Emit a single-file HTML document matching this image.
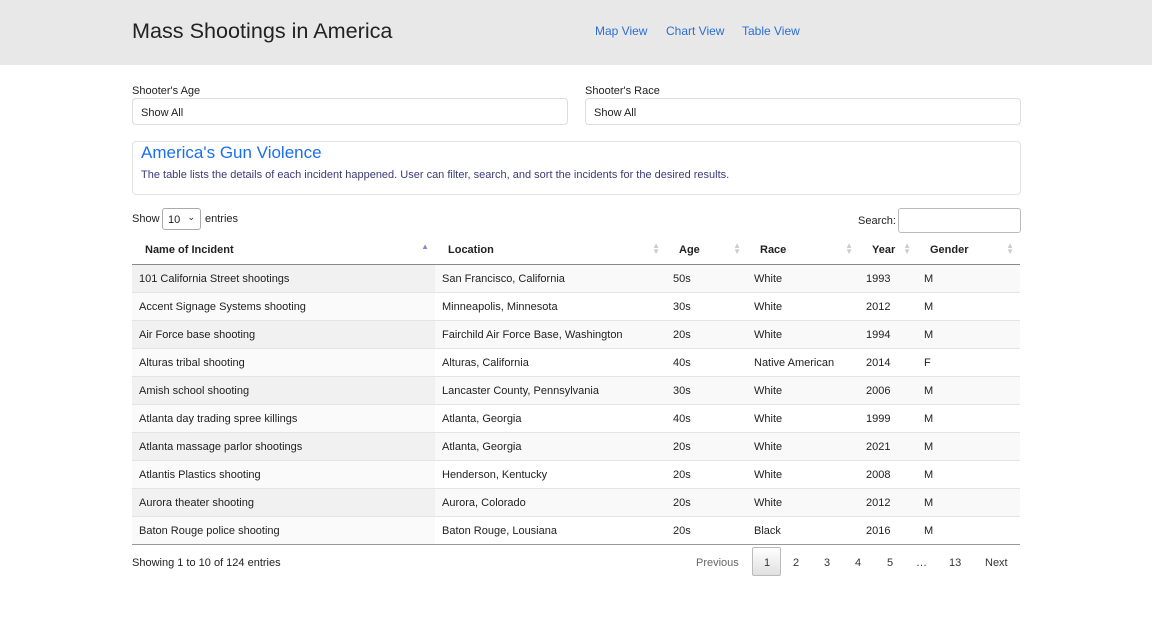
<!DOCTYPE html>
<html><head><meta charset="utf-8"><style>
*{box-sizing:border-box;margin:0;padding:0}
body{width:1152px;height:643px;background:#fff;font-family:"Liberation Sans",sans-serif;color:#222;position:relative;overflow:hidden}
.hdr{position:absolute;left:0;top:0;width:1152px;height:65px;background:#e8e8e8}
.title{position:absolute;left:132px;top:18px;font-size:21.6px;color:#222}
.nav{position:absolute;top:24px;font-size:12px;color:#2a6fd6}
.lbl{position:absolute;top:85px;font-size:11px;color:#222}
.sel{position:absolute;top:98px;height:27px;border:1px solid #ddd;border-radius:4px;font-size:11px;padding:8px 8px}
.card{position:absolute;left:132px;top:141px;width:889px;height:54px;border:1px solid #e2e2e2;border-radius:4px}
.card h2{position:absolute;left:8px;top:1px;font-size:17px;font-weight:normal;color:#1a6ff0}
.card p{position:absolute;left:8px;top:27px;font-size:11px;color:#3a3a7a}
.small{position:absolute;font-size:11px;color:#222}
table{position:absolute;left:132px;top:234px;width:888px;border-collapse:collapse;font-size:11px;table-layout:fixed}
th{height:30px;text-align:left;font-weight:bold;border-bottom:1px solid #888;padding-left:13px;padding-top:2px;position:relative}
th .a{position:absolute;right:6px;top:9px;font-size:8px;line-height:6px;color:#ccc}
td{height:28px;padding-left:7px;padding-top:2px;border-top:1px solid #e4e4e4}
tbody tr:first-child td{border-top:none}
tr.o td{background:#f9f9f9}tr.o td:first-child{background:#f1f1f1}
tr.e td:first-child{background:#fafafa}
.bot{position:absolute;left:132px;top:544px;width:888px;border-top:1px solid #999}
.pg{position:absolute;top:557px;font-size:11px;color:#333}
</style></head><body>
<div class="hdr"><div class="title">Mass Shootings in America</div>
<div class="nav" style="left:595px">Map View</div><div class="nav" style="left:666px">Chart View</div><div class="nav" style="left:742px">Table View</div></div>
<div class="lbl" style="left:132px">Shooter's Age</div><div class="sel" style="left:132px;width:436px">Show All</div>
<div class="lbl" style="left:585px">Shooter's Race</div><div class="sel" style="left:585px;width:436px">Show All</div>
<div class="card"><h2>America's Gun Violence</h2><p>The table lists the details of each incident happened. User can filter, search, and sort the incidents for the desired results.</p></div>
<div class="small" style="left:132px;top:213px">Show</div>
<div style="position:absolute;left:162px;top:208px;width:39px;height:22px;border:1px solid #aaa;border-radius:3px;font-size:11px;padding:5px 5px">10<span style="position:absolute;right:5px;top:3px;font-size:9px">⌄</span></div>
<div class="small" style="left:205px;top:213px">entries</div>
<div class="small" style="left:858px;top:215px">Search:</div>
<div style="position:absolute;left:898px;top:208px;width:123px;height:25px;border:1px solid #bbb;border-radius:3px"></div>
<table>
<colgroup><col style="width:303px"><col style="width:231px"><col style="width:81px"><col style="width:112px"><col style="width:58px"><col style="width:103px"></colgroup>
<thead><tr><th>Name of Incident<span class="a" style="color:#8888cc;top:10px">▲</span></th><th>Location<span class="a">▲<br>▼</span></th><th>Age<span class="a">▲<br>▼</span></th><th>Race<span class="a">▲<br>▼</span></th><th>Year<span class="a">▲<br>▼</span></th><th>Gender<span class="a">▲<br>▼</span></th></tr></thead>
<tbody>
<tr class="o"><td>101 California Street shootings</td><td>San Francisco, California</td><td>50s</td><td>White</td><td>1993</td><td>M</td></tr>
<tr class="e"><td>Accent Signage Systems shooting</td><td>Minneapolis, Minnesota</td><td>30s</td><td>White</td><td>2012</td><td>M</td></tr>
<tr class="o"><td>Air Force base shooting</td><td>Fairchild Air Force Base, Washington</td><td>20s</td><td>White</td><td>1994</td><td>M</td></tr>
<tr class="e"><td>Alturas tribal shooting</td><td>Alturas, California</td><td>40s</td><td>Native American</td><td>2014</td><td>F</td></tr>
<tr class="o"><td>Amish school shooting</td><td>Lancaster County, Pennsylvania</td><td>30s</td><td>White</td><td>2006</td><td>M</td></tr>
<tr class="e"><td>Atlanta day trading spree killings</td><td>Atlanta, Georgia</td><td>40s</td><td>White</td><td>1999</td><td>M</td></tr>
<tr class="o"><td>Atlanta massage parlor shootings</td><td>Atlanta, Georgia</td><td>20s</td><td>White</td><td>2021</td><td>M</td></tr>
<tr class="e"><td>Atlantis Plastics shooting</td><td>Henderson, Kentucky</td><td>20s</td><td>White</td><td>2008</td><td>M</td></tr>
<tr class="o"><td>Aurora theater shooting</td><td>Aurora, Colorado</td><td>20s</td><td>White</td><td>2012</td><td>M</td></tr>
<tr class="e"><td>Baton Rouge police shooting</td><td>Baton Rouge, Lousiana</td><td>20s</td><td>Black</td><td>2016</td><td>M</td></tr>
</tbody></table>
<div class="bot"></div>
<div class="small" style="left:132px;top:557px">Showing 1 to 10 of 124 entries</div>
<div class="pg" style="left:696px;color:#666">Previous</div>
<div style="position:absolute;left:752px;top:547px;width:29px;height:29px;border:1px solid #bbb;border-radius:2px;background:linear-gradient(#fff,#e0e0e0)"></div>
<div class="pg" style="left:764px">1</div><div class="pg" style="left:793px">2</div><div class="pg" style="left:824px">3</div><div class="pg" style="left:855px">4</div><div class="pg" style="left:887px">5</div><div class="pg" style="left:916px">…</div><div class="pg" style="left:949px">13</div><div class="pg" style="left:985px">Next</div>
</body></html>
